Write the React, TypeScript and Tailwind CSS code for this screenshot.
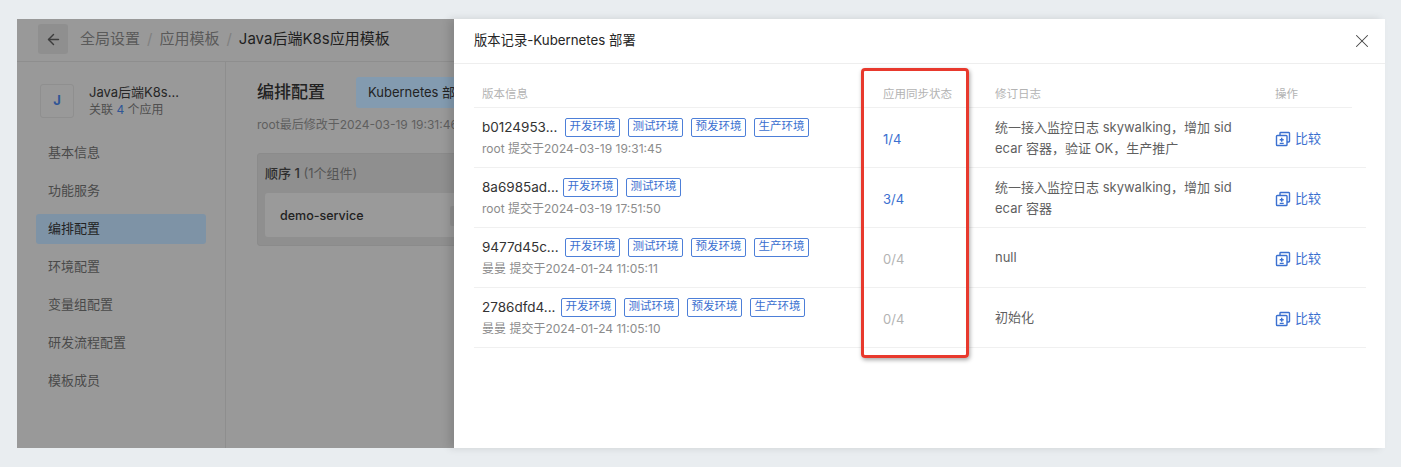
import { X, ArrowLeft } from "lucide-react";

const ENVS = ["开发环境", "测试环境", "预发环境", "生产环境"];

const rows = [
  {
    hash: "b0124953...",
    envs: 4,
    titleW: "w-[79px]",
    meta: "root 提交于2024-03-19 19:31:45",
    sync: "1/4",
    active: true,
    log: ["统一接入监控日志 skywalking，增加 sid", "ecar 容器，验证 OK，生产推广"],
  },
  {
    hash: "8a6985ad...",
    envs: 2,
    titleW: "w-[77px]",
    meta: "root 提交于2024-03-19 17:51:50",
    sync: "3/4",
    active: true,
    log: ["统一接入监控日志 skywalking，增加 sid", "ecar 容器"],
  },
  {
    hash: "9477d45c...",
    envs: 4,
    titleW: "w-[79px]",
    meta: "曼曼 提交于2024-01-24 11:05:11",
    sync: "0/4",
    active: false,
    log: ["null"],
  },
  {
    hash: "2786dfd4...",
    envs: 4,
    titleW: "w-[75px]",
    meta: "曼曼 提交于2024-01-24 11:05:10",
    sync: "0/4",
    active: false,
    log: ["初始化"],
  },
];

const NAV = ["基本信息", "功能服务", "编排配置", "环境配置", "变量组配置", "研发流程配置", "模板成员"];

const CompareIcon = () => (
  <svg width="16" height="16" viewBox="0 0 16 16" fill="none" stroke="#3b70d0" strokeWidth="1.4">
    <path d="M5 4V2.2a.7.7 0 0 1 .7-.7h8.1a.7.7 0 0 1 .7.7v8.1a.7.7 0 0 1-.7.7H12" />
    <rect x="1.5" y="4.5" width="10.5" height="10" rx="0.8" />
    <path d="M6.7 6.8v4M4.7 8.8h4M4.7 12.4h4" />
  </svg>
);

const EnvTag = ({ label }: { label: string }) => (
  <span className="flex h-[19px] w-[55px] items-center justify-center rounded-[2px] border border-[#4d7fd8] text-[11.5px] leading-none text-[#3b70d0]">
    {label}
  </span>
);

const Sidebar = () => (
  <div className="flex w-[209px] shrink-0 flex-col border-r border-[#8e8e8e] pl-[19px] pr-[19px] pt-[21px]">
    <div className="flex items-center gap-[15px] pl-[4px]">
      <div className="flex h-[34px] w-[34px] items-center justify-center rounded-[3px] border border-[#8f8f8f] text-[13px] font-bold text-[#2f5596]">
        J
      </div>
      <div>
        <div className="text-[13px] leading-[18px] text-[#262626]">Java后端K8s...</div>
        <div className="text-[12px] leading-[18px] text-[#4f4f4f]">
          关联 <span className="text-[#2f5596]">4</span> 个应用
        </div>
      </div>
    </div>
    <div className="mt-[19px] flex flex-col gap-[8px]">
      {NAV.map((item) => (
        <div
          key={item}
          className={`flex h-[30px] items-center rounded-[3px] pl-[12px] text-[13px] ${
            item === "编排配置" ? "bg-[#7e93a6] text-[#222222]" : "text-[#4a4a4a]"
          }`}
        >
          {item}
        </div>
      ))}
    </div>
  </div>
);

const LeftPane = () => (
  <div className="flex w-[437px] shrink-0 flex-col overflow-hidden bg-[#999999]">
    <div className="flex h-[43px] shrink-0 items-center gap-[12px] border-b border-[#8e8e8e] pb-[2px] pl-[21px]">
      <div className="flex h-[30px] w-[30px] items-center justify-center rounded-[3px] bg-[#8f8f8f]">
        <ArrowLeft size={17} color="#3d3d3d" />
      </div>
      <div className="flex items-center gap-[7px] whitespace-nowrap text-[15px]">
        <span className="text-[#5a5a5a]">全局设置</span>
        <span className="text-[#808080]">/</span>
        <span className="text-[#5a5a5a]">应用模板</span>
        <span className="text-[#808080]">/</span>
        <span className="text-[#1f1f1f]">Java后端K8s应用模板</span>
      </div>
    </div>
    <div className="flex min-h-0 flex-1">
      <Sidebar />
      <div className="min-w-0 flex-1 overflow-hidden pl-[31px] pt-[15px]">
        <div className="flex items-center">
          <span className="whitespace-nowrap text-[17px] font-medium text-[#222222]">编排配置</span>
          <span className="ml-[16px] h-[20px] w-px bg-[#8e8e8e]" />
          <span className="ml-[15px] flex h-[31px] w-[120px] shrink-0 items-center whitespace-nowrap rounded-[3px] bg-[#839bb0] pl-[12px] text-[13px] text-[#222222]">
            Kubernetes 部署
          </span>
        </div>
        <div className="mt-[8px] whitespace-nowrap text-[12px] leading-[18px] text-[#5f5f5f]">
          root最后修改于2024-03-19 19:31:46
        </div>
        <div className="mt-[19px] h-[93px] w-[300px] rounded-[3px] border border-[#8b8b8b] bg-[#8f8f8f] pl-[7px] pt-[10px]">
          <div className="text-[13px] leading-[18px] text-[#2e2e2e]">
            <span className="font-medium">顺序 1</span> <span className="text-[#555555]">(1个组件)</span>
          </div>
          <div className="mt-[11px] flex h-[44px] items-center rounded-[3px] bg-[#9a9a9a] pl-[15px] pt-[2px] text-[12.5px] font-medium text-[#222222]">
            <span className="w-[83px] whitespace-nowrap">demo-service</span>
            <span className="ml-[87px] h-[20px] w-[20px] shrink-0 rounded-[2px] bg-[#8f8f8f]" />
          </div>
        </div>
      </div>
    </div>
  </div>
);

const Drawer = () => (
  <div className="relative flex min-w-0 flex-1 flex-col bg-white shadow-[-5px_0_8px_rgba(0,0,0,0.12)]">
    <div className="flex h-[45px] shrink-0 items-center justify-between border-b border-[#eeeeee] pb-[1px] pl-[20px] pr-[12px]">
      <span className="text-[13.3px] text-[#262626]">版本记录-Kubernetes 部署</span>
      <X size={22} color="#444444" strokeWidth={1.1} />
    </div>
    <div className="pl-[20px] pr-[19px] pt-[15px]">
      <div className="mr-[14px] flex h-[29px] items-end border-b border-[#f0f0f0] pb-[4px] pl-[8px] text-[11.5px] leading-[18px] text-[#b3b3b3]">
        <span className="w-[401px]">版本信息</span>
        <span className="w-[112px]">应用同步状态</span>
        <span className="w-[280px]">修订日志</span>
        <span>操作</span>
      </div>
      {rows.map((row) => (
        <div key={row.hash} className="flex h-[60px] items-center border-b border-[#f0f0f0] pl-[8px]">
          <div className="w-[401px] shrink-0">
            <div className="flex items-center gap-[8px]">
              <span className={`${row.titleW} -mr-[4px] whitespace-nowrap text-[13.5px] text-[#333333]`}>{row.hash}</span>
              {ENVS.slice(0, row.envs).map((env) => (
                <EnvTag key={env} label={env} />
              ))}
            </div>
            <div className="mt-[3px] text-[12px] leading-[18px] text-[#8c8c8c]">{row.meta}</div>
          </div>
          <div className={`w-[112px] shrink-0 pt-[4px] text-[13px] ${row.active ? "text-[#3b70d0]" : "text-[#b3b3b3]"}`}>
            {row.sync}
          </div>
          <div className="w-[280px] shrink-0 pr-[30px] text-[13px] leading-[21px] text-[#5f5f5f]">
            {row.log.map((line) => (
              <div key={line} className="whitespace-nowrap">
                {line}
              </div>
            ))}
          </div>
          <div className="flex items-center gap-[4px] pt-[2px] text-[13px] text-[#3b70d0]">
            <CompareIcon />
            <span>比较</span>
          </div>
        </div>
      ))}
    </div>
    <div className="absolute left-[407px] top-[49px] h-[290px] w-[108px] rounded-[4px] border-[3px] border-[#e8392d] shadow-[1px_2px_4px_rgba(0,0,0,0.35)]" />
  </div>
);

export default function App() {
  return (
    <div className="flex h-[467px] w-full bg-[#e9edf0] pb-[19px] pl-[17px] pr-[16px] pt-[19px]">
      <div className="flex min-w-0 flex-1 font-['Inter','Noto_Sans_CJK_SC',sans-serif]">
        <LeftPane />
        <Drawer />
      </div>
    </div>
  );
}
